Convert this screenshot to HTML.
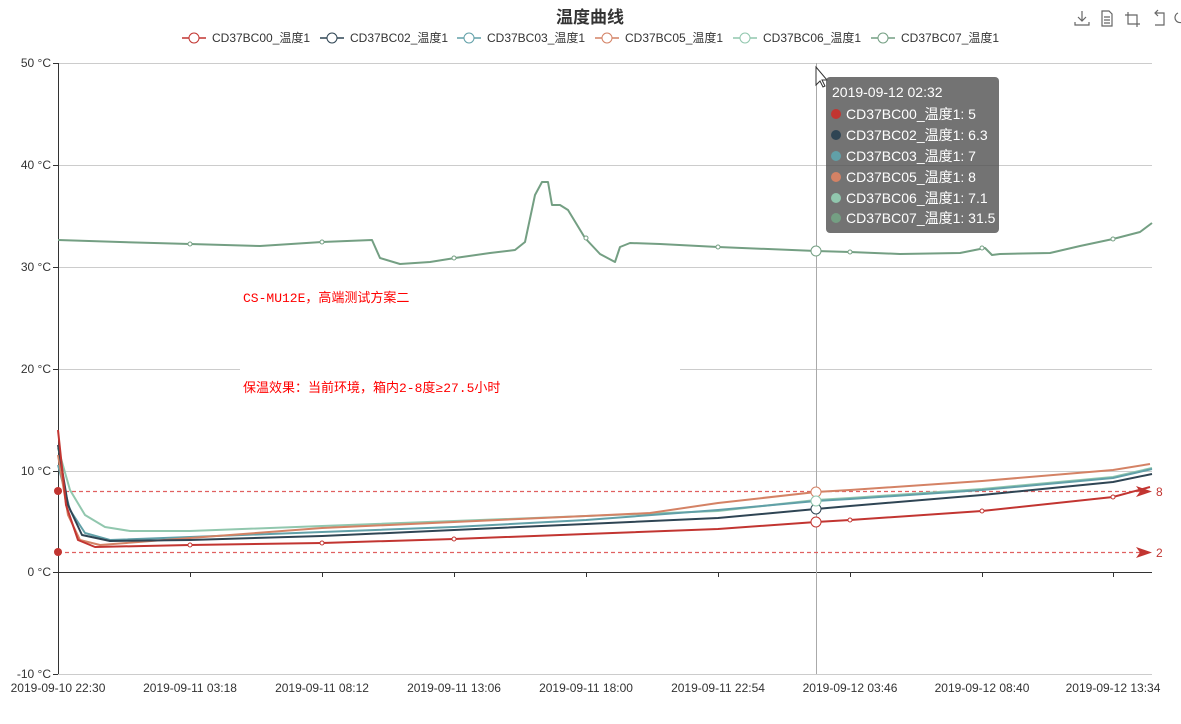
<!DOCTYPE html>
<html><head><meta charset="utf-8"><style>
html,body{margin:0;padding:0;background:#fff;width:1181px;height:724px;overflow:hidden}
svg{display:block}
text{font-family:"Liberation Sans","Noto Sans CJK SC",sans-serif}
</style></head><body>
<svg width="1181" height="724" viewBox="0 0 1181 724" xmlns="http://www.w3.org/2000/svg">
<text x="590" y="23" text-anchor="middle" font-size="17" font-weight="bold" fill="#333">温度曲线</text>
<g stroke="#666" fill="none" stroke-width="1.2">
<path d="M1082 11v10M1078 17l4 4 4-4M1075 22v3h14v-3"/>
<path d="M1102 11h7l3 3v12h-10z M1104 17h6M1104 20h6M1104 23h6"/>
<path d="M1128 12v12h12M1125 15h12v12"/>
<path d="M1156 13h8v12h-9M1158 10l-3 3 3 3"/>
<path d="M1178 13a5 5 0 1 0 4 0"/>
</g>
<g font-size="12" fill="#333">
<g transform="translate(182,38)"><line x1="0" x2="24" stroke="#c23531" stroke-width="1.5"/><circle cx="12" r="5" fill="#fff" stroke="#c23531"/><text x="30" y="4">CD37BC00_温度1</text></g>
<g transform="translate(320,38)"><line x1="0" x2="24" stroke="#2f4554" stroke-width="1.5"/><circle cx="12" r="5" fill="#fff" stroke="#2f4554"/><text x="30" y="4">CD37BC02_温度1</text></g>
<g transform="translate(457,38)"><line x1="0" x2="24" stroke="#61a0a8" stroke-width="1.5"/><circle cx="12" r="5" fill="#fff" stroke="#61a0a8"/><text x="30" y="4">CD37BC03_温度1</text></g>
<g transform="translate(595,38)"><line x1="0" x2="24" stroke="#d48265" stroke-width="1.5"/><circle cx="12" r="5" fill="#fff" stroke="#d48265"/><text x="30" y="4">CD37BC05_温度1</text></g>
<g transform="translate(733,38)"><line x1="0" x2="24" stroke="#91c7ae" stroke-width="1.5"/><circle cx="12" r="5" fill="#fff" stroke="#91c7ae"/><text x="30" y="4">CD37BC06_温度1</text></g>
<g transform="translate(871,38)"><line x1="0" x2="24" stroke="#749f83" stroke-width="1.5"/><circle cx="12" r="5" fill="#fff" stroke="#749f83"/><text x="30" y="4">CD37BC07_温度1</text></g>
</g>
<g stroke="#ccc" stroke-width="1">
<line x1="58" x2="1152" y1="63.5" y2="63.5"/><line x1="58" x2="1152" y1="165.5" y2="165.5"/>
<line x1="58" x2="1152" y1="267.5" y2="267.5"/><line x1="58" x2="1152" y1="369.5" y2="369.5"/>
<line x1="58" x2="1152" y1="471.5" y2="471.5"/><line x1="58" x2="1152" y1="674.5" y2="674.5"/>
</g>
<rect x="240" y="360" width="440" height="18" fill="#fff"/>
<g stroke="#333"><line x1="58.5" x2="58.5" y1="63" y2="674"/><line x1="58" x2="1152" y1="572.5" y2="572.5"/>
<path d="M53 63.5h5M53 165.5h5M53 267.5h5M53 369.5h5M53 471.5h5M53 572.5h5M53 674.5h5"/>
<path d="M58.5 572v5M190.5 572v5M322.5 572v5M454.5 572v5M586.5 572v5M718.5 572v5M850.5 572v5M982.5 572v5M1113.5 572v5"/></g>
<g font-size="12" fill="#333" text-anchor="end">
<text x="51" y="67">50 °C</text><text x="51" y="169">40 °C</text><text x="51" y="271">30 °C</text><text x="51" y="373">20 °C</text><text x="51" y="475">10 °C</text><text x="51" y="576">0 °C</text><text x="51" y="678">-10 °C</text></g>
<g font-size="12" fill="#333" text-anchor="middle">
<text x="58" y="692">2019-09-10 22:30</text><text x="190" y="692">2019-09-11 03:18</text><text x="322" y="692">2019-09-11 08:12</text><text x="454" y="692">2019-09-11 13:06</text><text x="586" y="692">2019-09-11 18:00</text><text x="718" y="692">2019-09-11 22:54</text><text x="850" y="692">2019-09-12 03:46</text><text x="982" y="692">2019-09-12 08:40</text><text x="1113" y="692">2019-09-12 13:34</text></g>
<line x1="816.5" x2="816.5" y1="63" y2="674" stroke="#aaa"/>
<g stroke="#e06060" stroke-dasharray="4,3" stroke-width="1.2"><line x1="58" x2="1140" y1="491.5" y2="491.5"/><line x1="58" x2="1140" y1="552.5" y2="552.5"/></g>
<g fill="#c23531"><path d="M1136 486l16 5.5-16 5.5 4-5.5z"/><path d="M1136 547l16 5.5-16 5.5 4-5.5z"/><circle cx="58" cy="491" r="4"/><circle cx="58" cy="552" r="4"/></g>
<g fill="#c23531" font-size="12"><text x="1156" y="496">8</text><text x="1156" y="557">2</text></g>
<g fill="none" stroke-width="2" stroke-linejoin="round">
<polyline stroke="#749f83" points="58,240 120,242 190,244 260,246 322,242 372,240 380,258 400,264 430,262 455,258 490,253 515,250 525,242 535,195 542,182 548,182 552,205 560,205 568,210 585,238 600,254 615,262 620,247 630,243 660,244 718,247 816,251 850,252 900,254 960,253 985,248 992,255 1000,254 1050,253 1080,246 1113,239 1140,232 1152,223"/>
<polyline stroke="#91c7ae" points="58,448 70,490 85,515 105,527 130,531 190,531 322,526 454,521 586,516 718,511 816,500 850,498 982,489 1113,477 1152,468"/>
<polyline stroke="#61a0a8" points="58,465 70,510 85,533 110,540 190,537 322,532 454,527 586,520 718,510 816,501 850,499 982,490 1113,478 1152,469"/>
<polyline stroke="#d48265" points="58,455 68,515 80,540 100,545 190,538 322,528 454,522 586,516 650,513 718,503 816,492 850,490 982,481 1113,470 1150,464"/>
<polyline stroke="#2f4554" points="58,445 68,505 82,535 110,541 190,540 322,536 454,530 586,524 718,518 816,509 850,506 982,495 1113,482 1152,474"/>
<polyline stroke="#c23531" points="58,430 66,505 78,540 95,547 190,545 322,543 454,539 586,534 718,529 816,522 850,520 982,511 1113,497 1150,487"/>
</g>
<g fill="#fff" stroke-width="1">
<circle cx="190" cy="244" r="2" stroke="#749f83"/><circle cx="322" cy="242" r="2" stroke="#749f83"/><circle cx="454" cy="258" r="2" stroke="#749f83"/><circle cx="586" cy="238" r="2" stroke="#749f83"/><circle cx="718" cy="247" r="2" stroke="#749f83"/><circle cx="850" cy="252" r="2" stroke="#749f83"/><circle cx="982" cy="248" r="2" stroke="#749f83"/><circle cx="1113" cy="239" r="2" stroke="#749f83"/>
<circle cx="190" cy="545" r="2" stroke="#c23531"/><circle cx="322" cy="543" r="2" stroke="#c23531"/><circle cx="454" cy="539" r="2" stroke="#c23531"/><circle cx="850" cy="520" r="2" stroke="#c23531"/><circle cx="982" cy="511" r="2" stroke="#c23531"/><circle cx="1113" cy="497" r="2" stroke="#c23531"/>
<circle cx="816" cy="251" r="5" stroke="#749f83"/><circle cx="816" cy="522" r="5" stroke="#c23531"/><circle cx="816" cy="509" r="5" stroke="#2f4554"/><circle cx="816" cy="492" r="5" stroke="#d48265"/><circle cx="816" cy="501" r="5" stroke="#91c7ae"/>
</g>
<g fill="#f00" font-size="13">
<text x="243" y="302" style="font-family:'Liberation Mono','Noto Sans CJK SC',monospace">CS-MU12E，高端测试方案二</text>
<text x="243" y="392" style="font-family:'Liberation Mono','Noto Sans CJK SC',monospace">保温效果：当前环境，箱内2-8度≥27.5小时</text>
</g>
<path d="M816 67v18l4-4 3 6 2-1-3-6h5z" fill="#fff" stroke="#333"/>
<rect x="826" y="77" width="173" height="156" rx="4" fill="rgba(80,80,80,0.8)"/>
<g font-size="14" fill="#fff">
<text x="832" y="97">2019-09-12 02:32</text>
<circle cx="836" cy="114" r="5" fill="#c23531"/><text x="846" y="119">CD37BC00_温度1: 5</text>
<circle cx="836" cy="135" r="5" fill="#2f4554"/><text x="846" y="140">CD37BC02_温度1: 6.3</text>
<circle cx="836" cy="156" r="5" fill="#61a0a8"/><text x="846" y="161">CD37BC03_温度1: 7</text>
<circle cx="836" cy="177" r="5" fill="#d48265"/><text x="846" y="182">CD37BC05_温度1: 8</text>
<circle cx="836" cy="198" r="5" fill="#91c7ae"/><text x="846" y="203">CD37BC06_温度1: 7.1</text>
<circle cx="836" cy="218" r="5" fill="#749f83"/><text x="846" y="223">CD37BC07_温度1: 31.5</text>
</g>
</svg>
</body></html>
